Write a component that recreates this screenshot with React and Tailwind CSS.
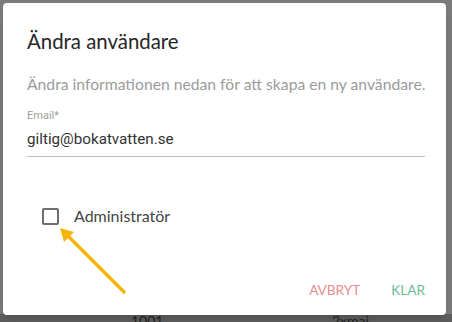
import React from 'react'

function Arrow() {
  return (
    <svg className="absolute left-0 top-0 pointer-events-none" width="452" height="322" viewBox="0 0 452 322">
      <line x1="124" y1="292" x2="68" y2="236" stroke="#f7b50c" strokeWidth="3.5" strokeLinecap="round" />
      <polygon points="60,228 74,232 64,242" fill="#f7b50c" />
    </svg>
  )
}

export default function App() {
  return (
    <div className="relative w-[452px] h-[322px] overflow-hidden bg-[#7b7b7b]" style={{ fontFamily: 'Lato, "Open Sans", sans-serif' }}>
      <div className="absolute left-0 right-0 top-[314px] bottom-0 bg-[#5e5e5e]" />
      <span className="absolute left-[131px] top-[312px] text-[14px] leading-[18px] text-[#222]">1001</span>
      <span className="absolute left-[332px] top-[312px] text-[14px] leading-[18px] text-[#222]">2xmai</span>

      <div className="relative ml-[3px] mt-[3px] w-[443px] h-[312px] bg-white rounded-[4px] shadow-lg flex flex-col">
        <h2 className="pl-6 pt-[24px] text-[20.4px] leading-[28px] text-[#262626]">Ändra användare</h2>
        <p className="pl-6 mt-[18px] text-[15.7px] leading-[22px] text-[#9b9b9b]">
          Ändra informationen nedan för att skapa en ny användare.
        </p>
        <div className="ml-6 mr-[21px] mt-[14px] border-b border-[#bdbdbd]" style={{ fontFamily: 'Roboto, sans-serif' }}>
          <div className="text-[11px] leading-[14px] text-[#9e9e9e]">Email*</div>
          <div className="mt-[6px] pb-[7px] text-[15.2px] leading-[20px] text-[#333]">giltig@bokatvatten.se</div>
        </div>
        <div className="flex items-center ml-[39px] mt-[48px]">
          <span className="w-[17px] h-[17px] border-2 border-[#6d6d6d] rounded-[2px]" />
          <span className="ml-[15px] text-[16px] leading-[22px] text-[#444]">Administratör</span>
        </div>
        <div className="flex justify-end items-center gap-[31px] mt-auto mb-[15px] pr-[21px] text-[13.6px] leading-[20px]">
          <span className="text-[#e88b91]">AVBRYT</span>
          <span className="text-[#69bd93]">KLAR</span>
        </div>
      </div>
      <Arrow />
    </div>
  )
}
